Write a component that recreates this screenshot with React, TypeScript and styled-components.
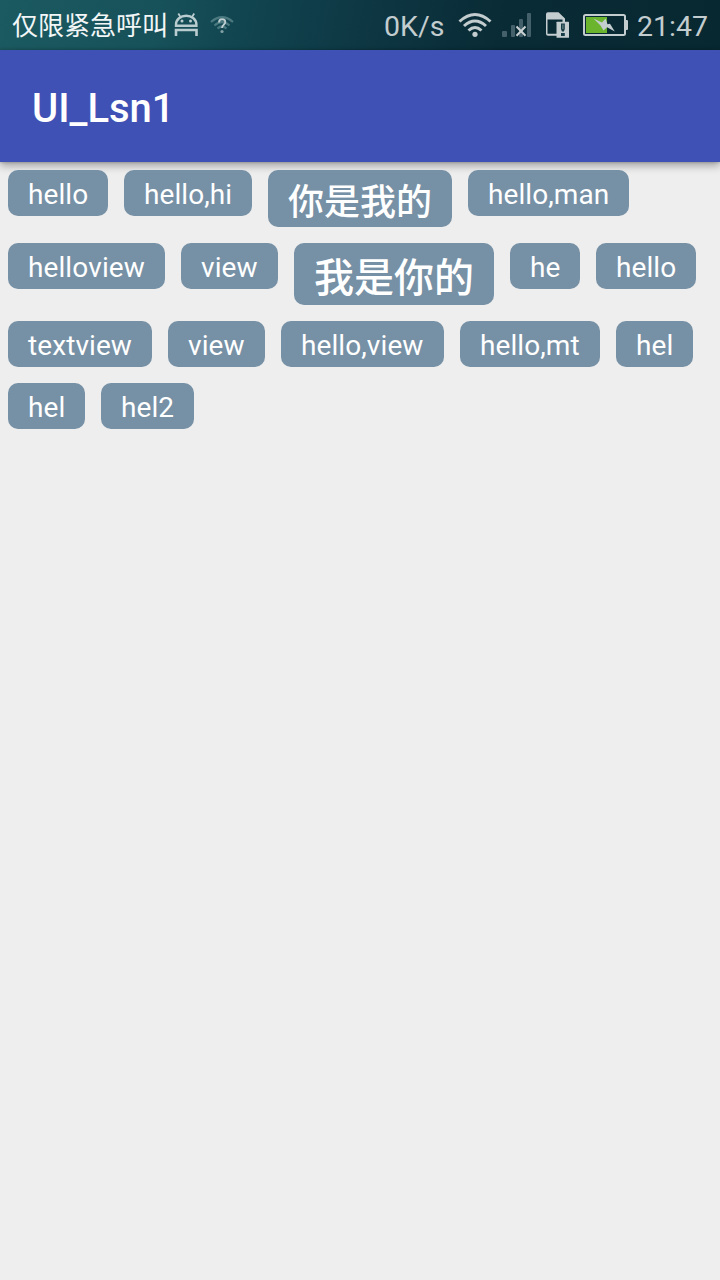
import React from "react";
import styled, { createGlobalStyle } from "styled-components";

const GlobalStyle = createGlobalStyle`
  * { box-sizing: border-box; }
  body {
    margin: 0;
    background: #eeeeee;
    font-family: Roboto, "Noto Sans CJK SC", sans-serif;
    font-kerning: none;
  }
`;

const Screen = styled.div`
  width: 720px;
  height: 1280px;
  display: flex;
  flex-direction: column;
  background: #eeeeee;
  overflow: hidden;
`;

const StatusBar = styled.header`
  height: 50px;
  flex: none;
  display: flex;
  align-items: center;
  padding: 0 12px;
  color: #c3ccce;
  background: linear-gradient(100deg, #1b5a60 0%, #17515a 22%, #10434e 36%, #0d3642 52%, #092b35 70%, #082831 100%);
  svg { display: block; flex: none; }
`;

const Carrier = styled.span`
  width: 156px;
  margin-right: 6px;
  padding-bottom: 2px;
  font-size: 26px;
  line-height: 48px;
  font-family: "Noto Sans CJK SC", sans-serif;
  color: #f2f6f6;
  white-space: nowrap;
`;

const NoticeIcons = styled.div`
  display: flex;
  gap: 9px;
`;

const SystemInfo = styled.div`
  display: flex;
  align-items: center;
  margin-left: auto;
`;

const Reading = styled.span<{ $width: number }>`
  width: ${(p) => p.$width}px;
  font-size: 28.5px;
  line-height: 46px;
  padding-top: 4px;
  white-space: nowrap;
`;

const IndicatorGroup = styled.div`
  display: flex;
  margin: 0 9px 0 14px;
`;

const AppBar = styled.div`
  height: 112px;
  flex: none;
  display: flex;
  align-items: center;
  padding: 6px 32px 0;
  background: #3f51b5;
  box-shadow: 0 4px 8px rgba(0, 0, 0, 0.3), 0 0 3px rgba(0, 0, 0, 0.25);
`;

const Title = styled.h1`
  margin: 0;
  color: #fff;
  font-size: 40px;
  line-height: 48px;
  font-weight: 500;
`;

const TagFlow = styled.main`
  display: flex;
  flex-wrap: wrap;
  align-items: flex-start;
  align-content: flex-start;
  gap: 16px;
  padding: 8px;
  position: relative;
`;

type TagSize = "normal" | "large" | "huge";

const tagSizes: Record<TagSize, { font: number; height: number; line: number; weight: number; spacing: number }> = {
  normal: { font: 28, height: 46, line: 50, weight: 400, spacing: 0.08 },
  large: { font: 36, height: 57, line: 66, weight: 500, spacing: 0 },
  huge: { font: 40, height: 62, line: 72, weight: 500, spacing: 0 },
};

const TagBox = styled.span<{ $size: TagSize; $width: number }>`
  width: ${(p) => p.$width}px;
  height: ${(p) => tagSizes[p.$size].height}px;
  padding: 0 20px;
  border-radius: 10px;
  background: #7690a5;
  color: #fff;
  font-size: ${(p) => tagSizes[p.$size].font}px;
  font-weight: ${(p) => tagSizes[p.$size].weight};
  line-height: ${(p) => tagSizes[p.$size].line}px;
  letter-spacing: ${(p) => tagSizes[p.$size].spacing}px;
  white-space: nowrap;
`;

const tags: { text: string; width: number; size?: TagSize }[] = [
  { text: "hello", width: 100 },
  { text: "hello,hi", width: 128 },
  { text: "你是我的", width: 184, size: "large" },
  { text: "hello,man", width: 161 },
  { text: "helloview", width: 157 },
  { text: "view", width: 97 },
  { text: "我是你的", width: 200, size: "huge" },
  { text: "he", width: 70 },
  { text: "hello", width: 100 },
  { text: "textview", width: 144 },
  { text: "view", width: 97 },
  { text: "hello,view", width: 163 },
  { text: "hello,mt", width: 140 },
  { text: "hel", width: 77 },
  { text: "hel", width: 77 },
  { text: "hel2", width: 93 },
];

const RobotIcon = () => (
  <svg width="26" height="50" viewBox="174 0 26 50" fill="none" stroke="#b9cccf">
    <path d="M176 25.7V24.500a10.200 8.800 0 0 1 20.400 0v1.200z" strokeWidth="2.4" />
    <path d="M180.500 17L178.300 13.500M192 17L194.200 13.500" strokeWidth="1.8" />
    <path d="M176 36V30H196.500V36" strokeWidth="2.6" />
    <circle cx="182" cy="21" r="1.500" fill="#b9cccf" stroke="none" />
    <circle cx="190.500" cy="21" r="1.500" fill="#b9cccf" stroke="none" />
  </svg>
);

const UnknownWifiIcon = () => (
  <svg width="26" height="50" viewBox="209 0 26 50" fill="none">
    <g stroke="#4b7980" strokeWidth="2.200">
      <path d="M211 22Q222 12.500 233 22" />
      <path d="M214.500 25.500Q222 18.500 229.500 25.500" />
      <path d="M217.500 28.500Q222 24.500 226.500 28.500" />
    </g>
    <path d="M219 22.500c0-4.500 6.300-4 6.300-.5 0 2.800-3.300 2.800-3.300 6" stroke="#c0cfd1" strokeWidth="1.800" />
    <circle cx="222" cy="31.500" r="1.600" fill="#83a0a5" />
  </svg>
);

const WifiIcon = () => (
  <svg width="34" height="50" viewBox="458 0 34 50" fill="none" stroke="#c3ccce" strokeWidth="3">
    <path d="M459.500 21.500Q475 7.500 490.500 21.500" />
    <path d="M464 26Q475 16 486 26" />
    <path d="M468.500 30.500Q475 24.500 481.500 30.500" />
    <circle cx="475" cy="34.300" r="2.600" fill="#c3ccce" stroke="none" />
  </svg>
);

const NoSignalIcon = () => (
  <svg width="54" height="50" viewBox="492 0 54 50">
    <g fill="#44606a">
      <rect x="502" y="31" width="5" height="6" rx="1" />
      <rect x="511" y="25" width="4" height="12" rx="1" />
      <rect x="519" y="19" width="4" height="18" rx="1" />
      <rect x="527" y="13" width="4" height="24" rx="1" />
    </g>
    <path d="M516.500 26.500l9 9.200M525.500 26.500l-9 9.200" stroke="#c9d1d3" strokeWidth="2" />
  </svg>
);

const SimAlertIcon = () => (
  <svg width="37" height="50" viewBox="546 0 37 50">
    <path fill="#c3ccce" fillRule="evenodd" d="M548 12.300h10.500L565 18.500v17.300H548q-2 0-2-2V14.300q0-2 2-2zM547.500 19.500v14.300h15V19.500z" />
    <rect x="556.500" y="21.800" width="12.500" height="16" rx=".5" fill="#c3ccce" />
    <path fill="#163c46" d="M561 23.500h3.800v5.500l-.9 2.500h-2l-.9-2.500zM561 33h3.800v3h-3.800z" />
    <path fill="#7b9095" d="M562.400 24.500h1v4.500h-1z" />
  </svg>
);

const BatteryIcon = () => (
  <svg width="45" height="50" viewBox="583 0 45 50">
    <rect x="584" y="15" width="41" height="20" rx="1.500" fill="none" stroke="#c3ccce" strokeWidth="2" />
    <path fill="#c3ccce" d="M626 20h1q1 0 1 1v8q0 1-1 1h-1z" />
    <rect x="586" y="17" width="21" height="16" fill="#6ab42e" />
    <path fill="#c3ccce" d="M593.500 18.500L602 22.500L605.500 18.500L607.500 24.300L610 23.800L614.800 31.500L607 27.300L603.500 30.500L600.500 25.500Z" />
  </svg>
);

export default function App() {
  return (
    <Screen>
      <GlobalStyle />
      <StatusBar>
        <Carrier>仅限紧急呼叫</Carrier>
        <NoticeIcons>
          <RobotIcon />
          <UnknownWifiIcon />
        </NoticeIcons>
        <SystemInfo>
          <Reading $width={60}>0K/s</Reading>
          <IndicatorGroup>
            <WifiIcon />
            <NoSignalIcon />
            <SimAlertIcon />
            <BatteryIcon />
          </IndicatorGroup>
          <Reading $width={71}>21:47</Reading>
        </SystemInfo>
      </StatusBar>
      <AppBar>
        <Title>UI_Lsn1</Title>
      </AppBar>
      <TagFlow>
        {tags.map((tag, i) => (
          <TagBox key={i} $size={tag.size ?? "normal"} $width={tag.width}>
            {tag.text}
          </TagBox>
        ))}
      </TagFlow>
    </Screen>
  );
}
